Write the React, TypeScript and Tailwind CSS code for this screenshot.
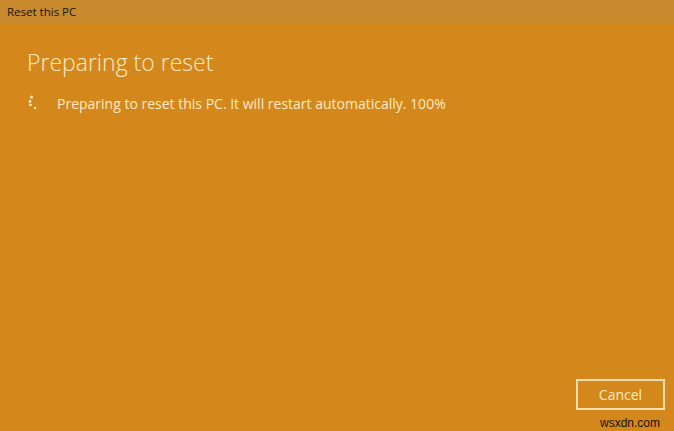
export default function App() {
  return (
    <div className="relative flex h-[431px] w-[674px] flex-col overflow-hidden bg-[#d4871b] font-['Segoe_UI','Open_Sans',sans-serif]">
      <div className="flex h-[24px] shrink-0 items-center bg-[#c98a2d] px-[7px] text-[11.5px] text-[#1a1208]">
        Reset this PC
      </div>
      <div className="flex flex-1 flex-col pl-[27px] pr-[9px] pt-[23px]">
        <h1 className="text-[23px] font-light leading-[30px] text-[#fcebc6]">Preparing to reset</h1>
        <div className="mt-[16px] flex items-center">
          <svg width="30" height="20" viewBox="0 0 30 20" className="shrink-0">
            <circle cx="4.5" cy="3" r="1.5" fill="#fcebc6" />
            <circle cx="3" cy="7.5" r="1.4" fill="#fcebc6" />
            <circle cx="3.5" cy="11" r="1.3" fill="#fcebc6" />
            <circle cx="8" cy="14" r="1.3" fill="#fcebc6" />
          </svg>
          <span className="text-[14px] text-[#fcebc6]">
            Preparing to reset this PC. It will restart automatically. 100%
          </span>
        </div>
        <div className="mb-[21px] mt-auto flex justify-end">
          <button className="h-[31px] w-[89px] border-2 border-[#f6dfae] text-[14px] text-[#fcebc6]">
            Cancel
          </button>
        </div>
      </div>
      <div className="absolute left-[600px] top-[414px] font-['Liberation_Sans',sans-serif] text-[12px] text-[#1a1208]">
        wsxdn.com
      </div>
    </div>
  );
}
